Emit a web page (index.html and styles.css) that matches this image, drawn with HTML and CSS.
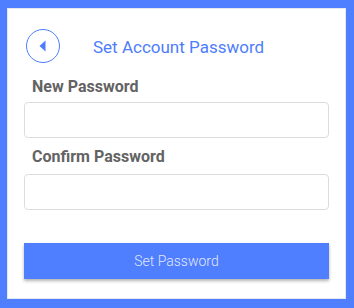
FILE: index.html
```html
<!DOCTYPE html>
<html lang="en">
<head>
    <meta charset="UTF-8">
    <meta name="viewport" content="width=device-width, initial-scale=1.0">
    <title>Set Account Password</title>
    <link rel="stylesheet" href="styles.css">
</head>
<body>
    <div class="card">
        <div class="header">
            <button type="button" class="back-btn" aria-label="Back">
                <svg width="34" height="34" viewBox="0 0 34 34">
                    <circle cx="17" cy="17" r="16.5" fill="none" stroke="#4d7dfd" stroke-width="1"/>
                    <path d="M13.5 17 L19.5 11.5 L19.5 22.5 Z" fill="#4d7dfd"/>
                </svg>
            </button>
            <h2 class="title">Set Account Password</h2>
        </div>

        <div class="form-group">
            <label for="newPassword">New Password</label>
            <input type="password" id="newPassword" name="newPassword">
        </div>
        <div class="form-group second">
            <label for="confirmPassword">Confirm Password</label>
            <input type="password" id="confirmPassword" name="confirmPassword">
        </div>

        <button type="button" class="submit-btn">Set Password</button>
    </div>
</body>
</html>
```

FILE: styles.css
```css
html, body {
    margin: 0;
    padding: 0;
}
body {
    font-family: Roboto, "Liberation Sans", Arial, sans-serif;
    background-color: #4f7efe;
    padding: 8px 8px 9px 7px;
    height: 308px;
    box-sizing: border-box;
}
.card {
    background-color: #fff;
    border: 1px solid #e4e8f2;
    height: 100%;
    box-sizing: border-box;
    padding: 20px 16px 0 16px;
}
.header {
    display: flex;
    align-items: center;
    height: 34px;
}
.back-btn {
    background: none;
    border: none;
    padding: 0;
    margin: 0 0 0 2px;
    width: 34px;
    height: 34px;
    cursor: pointer;
}
.back-btn svg {
    display: block;
}
.title {
    margin: 0 0 0 33px;
    font-size: 17px;
    font-weight: 400;
    color: #4d7dfd;
    line-height: 20px;
    position: relative;
    top: 1px;
}
.form-group label {
    display: block;
    margin-top: 14px;
    margin-bottom: 5px;
    padding-left: 8px;
    font-size: 16px;
    font-weight: 700;
    line-height: 20px;
    color: #636363;
}
.form-group.second label {
    margin-top: 9px;
    margin-bottom: 7px;
}
.form-group input {
    display: block;
    width: 100%;
    height: 36px;
    box-sizing: border-box;
    border: 1px solid #dcdcdc;
    border-radius: 4px;
    padding: 8px;
    font-size: 14px;
    outline: none;
}
.submit-btn {
    display: block;
    width: 100%;
    height: 36px;
    margin-top: 33px;
    background-color: #4f7efe;
    color: rgba(255, 255, 255, 0.85);
    border: none;
    font-family: Roboto, "Liberation Sans", Arial, sans-serif;
    font-size: 14px;
    font-weight: 300;
    box-shadow: 0 2px 3px rgba(0, 0, 0, 0.3);
    cursor: pointer;
}
```
